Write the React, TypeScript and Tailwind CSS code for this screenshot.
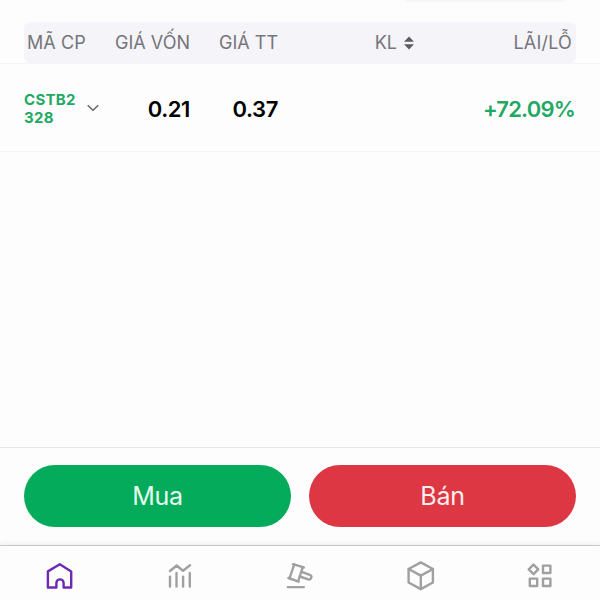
import { useState } from "react";
import type { ReactNode } from "react";
import clsx from "clsx";

const holdings = [
  { symbol: "CSTB2328", cost: "0.21", price: "0.37", change: "+72.09%" },
];

const tabs: { id: string; icon: ReactNode }[] = [
  {
    id: "home",
    icon: (
      <>
        <path d="M29.8 14.3 41.2 21.4V37.5H33.6V33a3.6 3.6 0 0 0-7.2 0v4.5H17.9V21.4Z" />
      </>
    ),
  },
  {
    id: "market",
    icon: (
      <>
        <path d="m20 21 6.7-5.5 6.3 5.2 7-5.5" />
        <path d="M20 26.6v10M26.5 23v13.6M33.1 26.6v10M39.8 23v13.6" />
      </>
    ),
  },
  {
    id: "auction",
    icon: (
      <>
        <path d="m23 14.2 10.8 3.2M18.4 28l10.2 3.6" />
        <path d="M24.2 14.7 19.6 28.2M32.8 17.2l-4.6 14" />
        <path d="m31.6 21.9 8.2 3a2.3 2.3 0 0 1-1.6 4.4l-8.3-2.8" />
        <path d="M17.8 37.1h16" />
      </>
    ),
  },
  {
    id: "products",
    icon: (
      <>
        <path d="m30.8 12.4 12.1 6.6v13.5l-12.1 6.6-12.2-6.6V19Z" />
        <path d="m18.6 19 12.2 6.6L42.9 19M30.8 25.6v13.5" />
      </>
    ),
  },
  {
    id: "more",
    icon: (
      <>
        <path d="m23.5 14.6 4.8 4.8-4.8 4.8-4.8-4.8Z" />
        <path d="M33 15.6h7.4V23H33ZM19.8 28.6h7.4V36h-7.4ZM33 28.6h7.4V36H33Z" />
      </>
    ),
  },
];

function TableHeader() {
  return (
    <div className="mx-6 flex h-[41px] shrink-0 items-center rounded-md bg-[#f4f4f9] pr-1 pl-[3px] text-[18px] text-[#75757a]">
      <span className="w-[69px] tracking-[0.1px]">MÃ CP</span>
      <span className="w-[94px] text-right">GIÁ VỐN</span>
      <span className="w-[88px] text-right">GIÁ TT</span>
      <span className="flex w-[136px] items-center justify-end gap-[7px]">
        KL
        <svg viewBox="0 0 10 14" className="h-3.5 w-2.5 overflow-visible fill-[#5d5d62]">
          <path d="M5 .6 10 5.8H0ZM5 13.4 0 8.2h10Z" />
        </svg>
      </span>
      <span className="flex-1 text-right tracking-[0.2px]">LÃI/LỖ</span>
    </div>
  );
}

export default function App() {
  const [activeTab, setActiveTab] = useState("home");

  return (
    <div className="flex h-[600px] w-[600px] flex-col overflow-hidden bg-[#fdfdfd] font-['Inter','Liberation_Sans',sans-serif]">
      {/* Bottom edge of the card above */}
      <div className="mb-5 ml-[405px] h-0.5 w-[160px] shrink-0 rounded-b-full bg-[#f6f6f7]" />

      <TableHeader />

      {holdings.map((item) => (
        <div
          key={item.symbol}
          className="flex h-[89px] shrink-0 items-center border-y border-[#f5f5f6] px-6 pt-[3px]"
        >
          <span className="w-[55px] text-[15px] leading-[18.5px] font-bold tracking-[0.3px] break-all text-[#21a863]">
            {item.symbol}
          </span>
          <svg
            viewBox="0 0 14 10"
            className="mb-0.5 ml-[7px] h-2.5 w-3.5 fill-none stroke-[#66666a]"
            strokeWidth="1.5"
          >
            <path d="m1.7 2.3 5.3 5 5.3-5" />
          </svg>
          <span className="w-[90px] text-right text-[22px] font-semibold tracking-[-0.4px] text-black">{item.cost}</span>
          <span className="w-[88px] text-right text-[22px] font-semibold tracking-[-0.4px] text-black">{item.price}</span>
          <span className="mr-px flex-1 text-right text-[22px] font-semibold tracking-[-0.8px] text-[#21a863]">
            {item.change}
          </span>
        </div>
      ))}

      <div className="flex-1" />

      <div className="flex h-[98px] shrink-0 gap-[18px] border-t border-[#e6e6e8] px-6 pt-[17px]">
        <button className="h-[62px] flex-1 rounded-full bg-[#04ab5a] pt-0.5 text-[25px] tracking-[-0.3px] text-[#e9fbf1]">
          Mua
        </button>
        <button className="h-[62px] flex-1 rounded-full bg-[#dc3743] pt-0.5 text-[25px] tracking-[-0.3px] text-[#fdeeee]">
          Bán
        </button>
      </div>

      <nav className="flex h-[55px] shrink-0 border-t border-[#c9c9ca] pt-1 shadow-[0_-1px_5px_rgba(0,0,0,0.07)]">
        {tabs.map((tab) => (
          <button
            key={tab.id}
            onClick={() => setActiveTab(tab.id)}
            className={clsx(
              "flex h-[50px] flex-1 justify-center",
              activeTab === tab.id ? "text-[#6c2bb5]" : "text-[#a0a0a1]"
            )}
          >
            <svg
              viewBox="0 0 60 50"
              className="h-[50px] w-[60px]"
              fill="none"
              stroke="currentColor"
              strokeWidth="2.4"
              strokeLinejoin="round"
              strokeLinecap="round"
            >
              {tab.icon}
            </svg>
          </button>
        ))}
      </nav>
    </div>
  );
}
